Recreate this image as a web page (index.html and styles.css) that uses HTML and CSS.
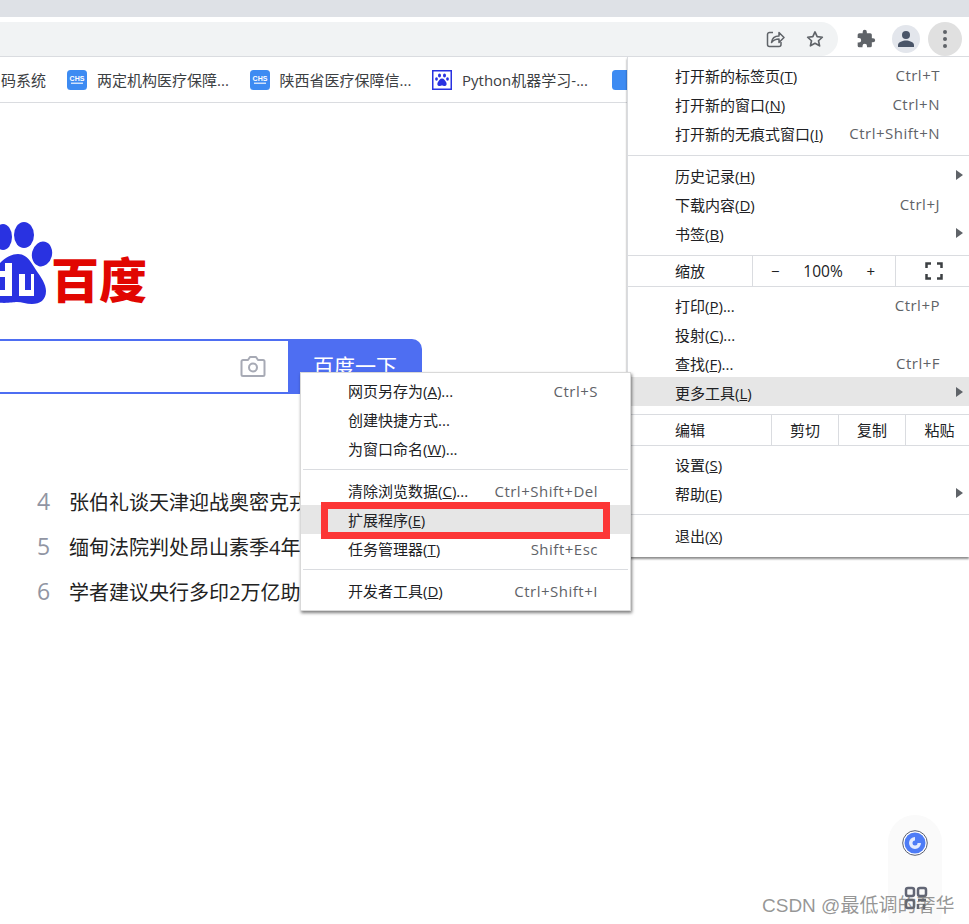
FILE: index.html
```html
<!DOCTYPE html>
<html lang="zh-CN">
<head>
    <meta charset="UTF-8">
    <meta name="viewport" content="width=device-width, initial-scale=1.0">
    <title>百度一下，你就知道</title>
    <link rel="stylesheet" href="styles.css">
</head>
<body>

<div class="tabstrip"></div>

<div class="toolbar">
    <div class="omnibox">
        <svg class="icon-share" width="20" height="20" viewBox="0 0 20 20" fill="none" stroke="#5f6368" stroke-width="1.5"><path d="M8 3.5H4.5a2 2 0 0 0-2 2v10a2 2 0 0 0 2 2h9.500a2 2 0 0 0 2-2V13"/><path d="M6.500 13.500c.5-4 3.500-6.500 7.500-6.500V3.500l5 5-5 5V10c-3 0-5.500 1-7.500 3.500z" stroke-linejoin="round"/></svg>
        <svg class="icon-star" width="20" height="20" viewBox="0 0 24 24" fill="none" stroke="#5f6368" stroke-width="2"><path d="M12 3.500l2.600 5.700 6.200.7-4.600 4.200 1.300 6.100L12 17.200l-5.500 3 1.300-6.100-4.600-4.200 6.200-.7z" stroke-linejoin="round"/></svg>
    </div>
    <svg class="icon-puzzle" width="20" height="20" viewBox="0 0 24 24" fill="#5f6368"><path d="M20.500 11H19V7a2 2 0 0 0-2-2h-4V3.500a2.500 2.500 0 0 0-5 0V5H4a2 2 0 0 0-2 2v3.800h1.500a2.700 2.700 0 0 1 0 5.400H2V20a2 2 0 0 0 2 2h3.800v-1.500a2.700 2.700 0 0 1 5.400 0V22H17a2 2 0 0 0 2-2v-4h1.500a2.500 2.500 0 0 0 0-5z"/></svg>
    <div class="avatar">
        <svg width="20" height="20" viewBox="0 0 20 20" fill="#4a5568"><circle cx="10" cy="6" r="4"/><path d="M2 18v-2c0-3 5-4.500 8-4.500s8 1.500 8 4.500v2z"/></svg>
    </div>
    <div class="kebab"><i></i><i></i><i></i></div>
</div>

<div class="bookmarks">
    <span class="bm-first">码系统</span>
    <span class="bm">
        <svg class="bm-icon" width="20" height="20" viewBox="0 0 20 20"><rect width="20" height="20" rx="3.500" fill="#3d8bf2"/><text x="10" y="10.500" font-size="7" font-weight="700" fill="#fff" text-anchor="middle" font-family="Liberation Sans">CHS</text><rect x="4" y="12.500" width="12" height="1.500" fill="#cfe2fb"/></svg>
        两定机构医疗保障...
    </span>
    <span class="bm">
        <svg class="bm-icon" width="20" height="20" viewBox="0 0 20 20"><rect width="20" height="20" rx="3.500" fill="#3d8bf2"/><text x="10" y="10.500" font-size="7" font-weight="700" fill="#fff" text-anchor="middle" font-family="Liberation Sans">CHS</text><rect x="4" y="12.500" width="12" height="1.500" fill="#cfe2fb"/></svg>
        陕西省医疗保障信...
    </span>
    <span class="bm bm-python">
        <svg class="bm-icon" width="20" height="20" viewBox="0 0 20 20"><rect x=".75" y=".75" width="18.500" height="18.500" fill="#fff" stroke="#2932e1" stroke-width="1.500"/><g fill="#2932e1"><ellipse cx="7.500" cy="5.500" rx="1.500" ry="2"/><ellipse cx="12.500" cy="5.500" rx="1.500" ry="2"/><ellipse cx="4.500" cy="9" rx="1.400" ry="1.800"/><ellipse cx="15.500" cy="9" rx="1.400" ry="1.800"/><path d="M10 8.500c2 0 3 2 4 3.500s1 4-1.500 4c-1 0-1.500-.5-2.500-.5s-1.500.5-2.500.5C5 16 5 13.500 6 12s2-3.500 4-3.500z"/></g></svg>
        Python机器学习-...
    </span>
    <span class="bm">
        <svg class="bm-icon" width="20" height="20" viewBox="0 0 20 20"><rect width="20" height="20" rx="3.500" fill="#3d8bf2"/></svg>
    </span>
</div>

<div class="page">
    <div class="logo">
        <svg class="paw" width="54" height="84" viewBox="0 0 54 84" fill="#2932e1">
            <ellipse cx="3" cy="15" rx="9" ry="13"/>
            <ellipse cx="24" cy="13" rx="10" ry="13"/>
            <ellipse cx="42" cy="32" rx="10" ry="12.500" transform="rotate(14 42 32)"/>
            <path d="M-8 80V50C0 40 8 32 18 32c9 0 13 8 18 16 5 7 10 14 10 21 0 9-6 13-14 13-6 0-10-2-15-2s-10 2-25 0z"/>
            <path fill="#fff" d="M0 49h5v-8h7v33H0zM5 55v13h-5V55zM19 52h6v16h6V52h3v22H19z"/>
            <path d="M0 55h5v13H0z"/>
        </svg>
        <span class="logo-text">百度</span>
    </div>

    <div class="search">
        <div class="search-input">
            <svg width="26" height="24" viewBox="0 0 26 24" fill="none" stroke="#a7aab5" stroke-width="2"><path d="M3 6h5l2-3h6l2 3h5a1.500 1.500 0 0 1 1.500 1.500v13A1.500 1.500 0 0 1 23 22H3a1.500 1.500 0 0 1-1.500-1.500v-13A1.500 1.500 0 0 1 3 6z" stroke-linejoin="round"/><circle cx="13" cy="13.500" r="4"/></svg>
        </div>
        <div class="search-btn">百度一下</div>
    </div>

    <ul class="hot">
        <li><span class="hot-num">4</span>张伯礼谈天津迎战奥密克戎</li>
        <li><span class="hot-num">5</span>缅甸法院判处昂山素季4年</li>
        <li><span class="hot-num">6</span>学者建议央行多印2万亿助</li>
    </ul>
</div>

<!-- chrome main menu -->
<div class="menu main-menu">
    <div class="group g-top">
        <div class="item"><span>打开新的标签页(<u>T</u>)</span><span class="key">Ctrl+T</span></div>
        <div class="item"><span>打开新的窗口(<u>N</u>)</span><span class="key">Ctrl+N</span></div>
        <div class="item"><span>打开新的无痕式窗口(<u>I</u>)</span><span class="key">Ctrl+Shift+N</span></div>
    </div>
    <div class="group g-mid">
        <div class="item arrow"><span>历史记录(<u>H</u>)</span></div>
        <div class="item"><span>下载内容(<u>D</u>)</span><span class="key">Ctrl+J</span></div>
        <div class="item arrow"><span>书签(<u>B</u>)</span></div>
    </div>
    <div class="cell-row zoom-row">
        <span class="cell-label">缩放</span>
        <div class="zoom-ctl"><span>−</span><span class="zoom-val">100%</span><span>+</span></div>
        <div class="zoom-full">
            <svg width="18" height="18" viewBox="0 0 18 18" fill="none" stroke="#3c4043" stroke-width="2.500"><path d="M1.500 6V1.500H6M12 1.500h4.500V6M16.500 12v4.500H12M6 16.500H1.500V12"/></svg>
        </div>
    </div>
    <div class="group g-print">
        <div class="item"><span>打印(<u>P</u>)...</span><span class="key">Ctrl+P</span></div>
        <div class="item"><span>投射(<u>C</u>)...</span></div>
        <div class="item"><span>查找(<u>F</u>)...</span><span class="key">Ctrl+F</span></div>
        <div class="item arrow hover"><span>更多工具(<u>L</u>)</span></div>
    </div>
    <div class="cell-row edit-row">
        <span class="cell-label">编辑</span>
        <span class="edit-cell">剪切</span>
        <span class="edit-cell">复制</span>
        <span class="edit-cell">粘贴</span>
    </div>
    <div class="group g-set">
        <div class="item"><span>设置(<u>S</u>)</span></div>
        <div class="item arrow"><span>帮助(<u>E</u>)</span></div>
    </div>
    <div class="group g-exit">
        <div class="item"><span>退出(<u>X</u>)</span></div>
    </div>
</div>

<!-- more tools submenu -->
<div class="menu sub-menu">
    <div class="group s-top">
        <div class="item"><span>网页另存为(<u>A</u>)...</span><span class="key">Ctrl+S</span></div>
        <div class="item"><span>创建快捷方式...</span></div>
        <div class="item"><span>为窗口命名(<u>W</u>)...</span></div>
    </div>
    <div class="group s-mid">
        <div class="item"><span>清除浏览数据(<u>C</u>)...</span><span class="key">Ctrl+Shift+Del</span></div>
        <div class="item hover"><span>扩展程序(<u>E</u>)</span></div>
        <div class="item"><span>任务管理器(<u>T</u>)</span><span class="key">Shift+Esc</span></div>
    </div>
    <div class="group s-end">
        <div class="item"><span>开发者工具(<u>D</u>)</span><span class="key">Ctrl+Shift+I</span></div>
    </div>
</div>

<div class="red-box"></div>

<div class="float-bar">
    <svg width="26" height="26" viewBox="0 0 26 26"><circle cx="13" cy="13" r="12.300" fill="#fff" stroke="#5b6070" stroke-width="1"/><circle cx="13" cy="13" r="10.500" fill="#4e7cf6"/><path d="M13 7a6 6 0 1 0 6 6h-6z" fill="#fff" opacity=".85"/><circle cx="13" cy="13" r="2.500" fill="#4e7cf6"/></svg>
    <svg class="float-qr" width="24" height="24" viewBox="0 0 24 24" fill="none" stroke="#626675" stroke-width="2.500"><rect x="2" y="2" width="8" height="8" rx="2"/><rect x="14" y="2" width="8" height="8" rx="2"/><rect x="2" y="14" width="8" height="8" rx="2"/><path d="M14 14h8M14 18v5M20 18v5"/></svg>
</div>

<div class="watermark">CSDN @最低调的奢华</div>

</body>
</html>
```

FILE: styles.css
```css
* {
    box-sizing: border-box;
}
body {
    margin: 0;
    height: 924px;
    overflow: hidden;
    position: relative;
    background: #fff;
    font-family: "Open Sans", "Noto Sans CJK SC", sans-serif;
    color: #202124;
}
.tabstrip {
    height: 17px;
    background: #dee1e6;
}
.toolbar {
    height: 40px;
    display: flex;
    align-items: flex-start;
    padding-top: 5px;
    border-bottom: 1px solid #dadce0;
}
.omnibox {
    width: 838px;
    height: 34px;
    background: #f1f3f4;
    border-radius: 0 17px 17px 0;
    display: flex;
    align-items: center;
    justify-content: flex-end;
    gap: 20px;
    padding-right: 13px;
}
.icon-puzzle {
    margin: 7px 0 0 18px;
}
.avatar {
    width: 28px;
    height: 28px;
    margin: 3px 0 0 16px;
    border-radius: 50%;
    background: #e3e6ec;
    display: flex;
    align-items: center;
    justify-content: center;
}
.kebab {
    width: 34px;
    height: 34px;
    margin: 0 0 0 8px;
    border-radius: 50%;
    background: #e0e0e0;
    display: flex;
    flex-direction: column;
    align-items: center;
    justify-content: center;
    gap: 3px;
}
.kebab i {
    width: 4px;
    height: 4px;
    border-radius: 50%;
    background: #5f6368;
}

.bookmarks {
    height: 46px;
    display: flex;
    align-items: center;
    border-bottom: 1px solid #dadce0;
    font-size: 15px;
    color: #3c4043;
    white-space: nowrap;
}
.bm-first {
    width: 70px;
    padding-left: 4px;
    margin-left: -3px;
    flex: none;
}
.bm {
    width: 182.500px;
    flex: none;
    display: flex;
    align-items: center;
}
.bm-python {
    width: 180px;
}
.bm-icon {
    margin-right: 10px;
    flex: none;
}

.page {
    padding-top: 119px;
}
.logo {
    height: 84px;
    display: flex;
    align-items: flex-start;
}
.paw {
    flex: none;
    display: block;
}
.logo-text {
    font-family: "Noto Sans CJK SC", sans-serif;
    font-weight: 900;
    font-size: 48px;
    line-height: 46px;
    margin-top: 32px;
    margin-left: -3px;
    color: #e10601;
    white-space: nowrap;
}
.search {
    width: 422px;
    height: 55px;
    margin-top: 33px;
    display: flex;
}
.search-input {
    width: 288px;
    border: 2px solid #4e6ef2;
    border-left: none;
    border-right: none;
    display: flex;
    align-items: center;
    justify-content: flex-end;
    padding: 0 22px 2px 0;
}
.search-btn {
    width: 134px;
    background: #4e6ef2;
    color: #fff;
    font-size: 21px;
    text-align: center;
    line-height: 54px;
    border-radius: 0 10px 10px 0;
}
.hot {
    list-style: none;
    margin: 85px 0 0;
    padding: 0 0 0 37px;
    font-size: 20px;
    color: #222;
}
.hot li {
    height: 45px;
    line-height: 45px;
    white-space: nowrap;
}
.hot-num {
    display: inline-block;
    width: 32px;
    font-size: 23px;
    color: #9195a3;
}

.menu {
    position: absolute;
    background: #fff;
    font-size: 15px;
    color: #202124;
    white-space: nowrap;
}
.main-menu {
    left: 627px;
    top: 57px;
    width: 342px;
    height: 500px;
    border-left: 1px solid #dadce0;
    box-shadow: 0 2px 2px rgba(0, 0, 0, .45);
}
.sub-menu {
    left: 300px;
    top: 372px;
    width: 331px;
    height: 239px;
    border: 1px solid #d9d9d9;
    box-shadow: 1px 2px 3px rgba(0, 0, 0, .5);
}
.item {
    height: 29px;
    display: flex;
    justify-content: space-between;
    align-items: center;
    padding-top: 1px;
    position: relative;
}
.main-menu .item {
    padding-left: 47px;
    padding-right: 29px;
}
.item.hover {
    background: #e6e6e6;
}
.item.arrow::after {
    content: "";
    position: absolute;
    right: 6px;
    top: 10px;
    border-left: 7px solid #5f6368;
    border-top: 5px solid transparent;
    border-bottom: 5px solid transparent;
}
.key {
    color: #5f6368;
    letter-spacing: .5px;
}
.group {
    border-bottom: 1px solid #dadce0;
}
.g-top { padding: 3px 0 8px; height: 99px; }
.g-mid { padding: 4px 0 8px; height: 100px; }
.g-print { padding: 3px 0 8px; height: 128px; }
.g-set { padding: 3px 0 7px; height: 69px; }
.g-exit { padding: 5px 0; border-bottom: none; }
.s-top { padding: 3px 0 6px; margin: 0 2px; }
.s-mid { padding: 6px 0; margin: 0 2px; }
.s-end { padding: 6px 0; margin: 0 2px; border-bottom: none; }
.sub-menu .group > .item {
    margin: 0 -2px;
    padding: 0 32px 0 47px;
}

.cell-row {
    display: flex;
    align-items: stretch;
    border-bottom: 1px solid #dadce0;
}
.cell-label {
    padding-left: 47px;
    line-height: 30px;
}
.zoom-row {
    height: 31px;
}
.zoom-row .cell-label {
    width: 124px;
}
.zoom-ctl {
    width: 143px;
    border-left: 1px solid #dadce0;
    display: flex;
    justify-content: space-around;
    align-items: center;
    padding: 0 8px 0 6px;
    font-size: 15px;
}
.zoom-val {
    font-size: 15.500px;
}
.zoom-full {
    flex: 1;
    border-left: 1px solid #dadce0;
    display: flex;
    align-items: center;
    justify-content: flex-end;
    padding-right: 26px;
}
.edit-row {
    height: 31px;
}
.edit-row .cell-label {
    width: 143px;
}
.edit-cell {
    width: 67px;
    border-left: 1px solid #dadce0;
    text-align: center;
    line-height: 30px;
}
.edit-cell:last-child {
    flex: 1;
    padding-left: 4px;
}

.red-box {
    position: absolute;
    left: 321px;
    top: 502px;
    width: 289px;
    height: 37px;
    border: 7px solid #fc3636;
}
.float-bar {
    position: absolute;
    left: 888px;
    top: 815px;
    width: 54px;
    height: 124px;
    border-radius: 27px;
    background: #fafafa;
    display: flex;
    flex-direction: column;
    align-items: center;
    padding-top: 15px;
    gap: 30px;
}
.float-qr {
    margin-left: 2px;
}
.watermark {
    position: absolute;
    left: 762px;
    top: 893px;
    font-family: "Liberation Sans", "Noto Sans CJK SC", sans-serif;
    font-size: 19px;
    line-height: 26px;
    color: rgba(110, 110, 110, .72);
    white-space: nowrap;
}
```
